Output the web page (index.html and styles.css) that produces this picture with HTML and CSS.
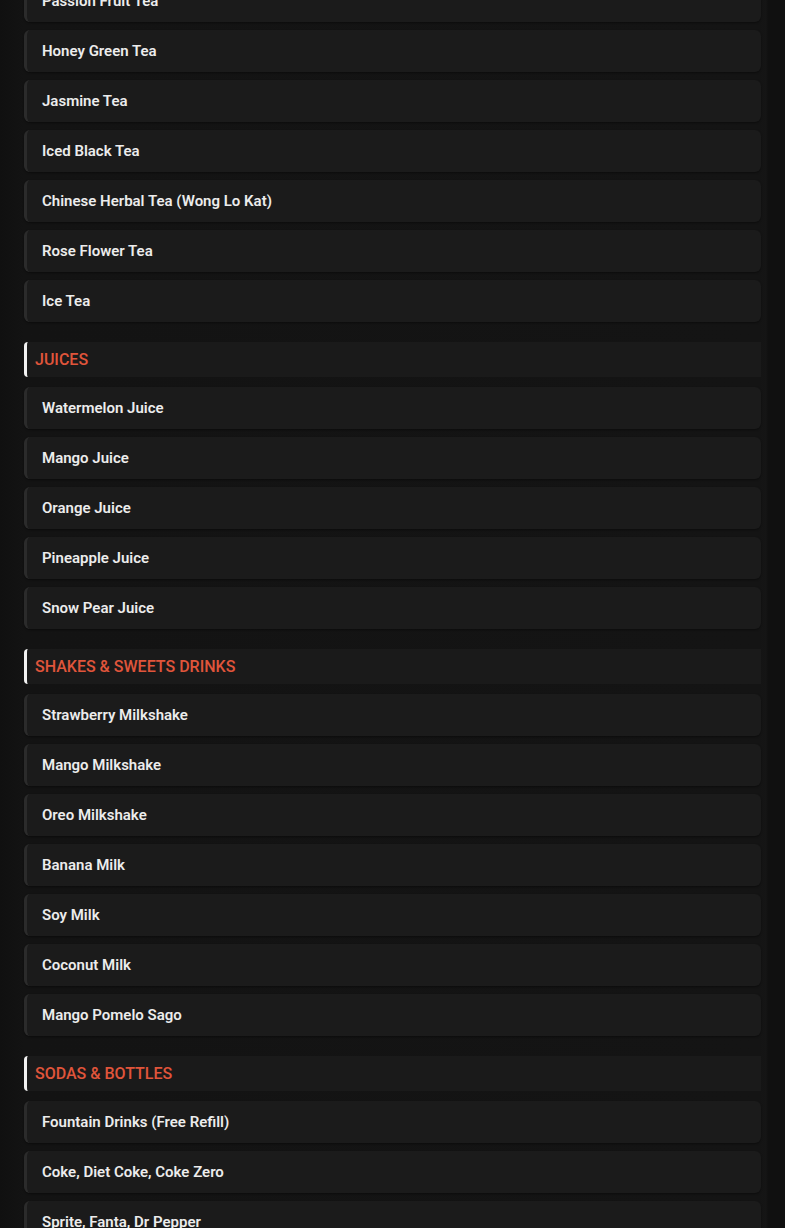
FILE: index.html
```html
<!DOCTYPE html>
<html>
<head>
<meta charset="utf-8">
<link rel="stylesheet" href="styles.css">
</head>
<body>
<div class="page">
  <div class="menu">
    <div class="item">Passion Fruit Tea</div>
    <div class="item">Honey Green Tea</div>
    <div class="item">Jasmine Tea</div>
    <div class="item">Iced Black Tea</div>
    <div class="item">Chinese Herbal Tea (Wong Lo Kat)</div>
    <div class="item">Rose Flower Tea</div>
    <div class="item">Ice Tea</div>

    <div class="cat">JUICES</div>
    <div class="item">Watermelon Juice</div>
    <div class="item">Mango Juice</div>
    <div class="item">Orange Juice</div>
    <div class="item">Pineapple Juice</div>
    <div class="item">Snow Pear Juice</div>

    <div class="cat">SHAKES &amp; SWEETS DRINKS</div>
    <div class="item">Strawberry Milkshake</div>
    <div class="item">Mango Milkshake</div>
    <div class="item">Oreo Milkshake</div>
    <div class="item">Banana Milk</div>
    <div class="item">Soy Milk</div>
    <div class="item">Coconut Milk</div>
    <div class="item">Mango Pomelo Sago</div>

    <div class="cat">SODAS &amp; BOTTLES</div>
    <div class="item">Fountain Drinks (Free Refill)</div>
    <div class="item">Coke, Diet Coke, Coke Zero</div>
    <div class="item">Sprite, Fanta, Dr Pepper</div>
  </div>
</div>
</body>
</html>
```
FILE: styles.css
```css
html, body {
  margin: 0;
  padding: 0;
  background: #111111;
  overflow: hidden;
}
.page {
  width: 785px;
  background: linear-gradient(to right, #101010 0, #131313 24px, #141414 760px, #151515 766px, #101010 768px, #101010 785px);
  min-height: 1228px;
}
.menu {
  display: flex;
  flex-direction: column;
  padding: 0 24px;
  margin-top: -20px;
  font-family: Roboto, "Liberation Sans", sans-serif;
}
.item {
  height: 42px;
  margin-bottom: 8px;
  box-sizing: border-box;
  display: flex;
  align-items: center;
  padding-left: 15px;
  background: #1b1b1b;
  border-left: 3px solid #2b2b2b;
  border-radius: 6px;
  color: #ececec;
  font-size: 15px;
  font-weight: 600;
  box-shadow: 0 1px 2px rgba(0,0,0,0.4);
}
.cat {
  height: 35px;
  margin-top: 12px;
  margin-bottom: 10px;
  box-sizing: border-box;
  display: flex;
  align-items: center;
  padding-left: 8px;
  background: #1a1a1a;
  border-left: 3px solid #f2f2f2;
  border-radius: 4px 0 0 4px;
  color: #e0553b;
  font-size: 16px;
  font-weight: 500;
}
```
